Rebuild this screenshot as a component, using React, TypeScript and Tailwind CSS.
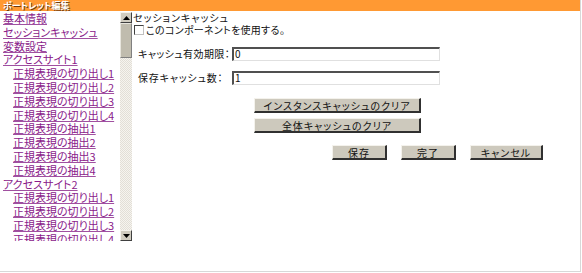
import React from 'react';

const FONT = {
  fontFamily: '"Noto Sans CJK JP", "Noto Sans", sans-serif',
  fontFeatureSettings: '"palt"',
};

interface NavItem {
  label: string;
  indent?: boolean;
}

const NAV_ITEMS: NavItem[] = [
  { label: '基本情報' },
  { label: 'セッションキャッシュ' },
  { label: '変数設定' },
  { label: 'アクセスサイト1' },
  { label: '正規表現の切り出し1', indent: true },
  { label: '正規表現の切り出し2', indent: true },
  { label: '正規表現の切り出し3', indent: true },
  { label: '正規表現の切り出し4', indent: true },
  { label: '正規表現の抽出1', indent: true },
  { label: '正規表現の抽出2', indent: true },
  { label: '正規表現の抽出3', indent: true },
  { label: '正規表現の抽出4', indent: true },
  { label: 'アクセスサイト2' },
  { label: '正規表現の切り出し1', indent: true },
  { label: '正規表現の切り出し2', indent: true },
  { label: '正規表現の切り出し3', indent: true },
  { label: '正規表現の切り出し4', indent: true },
];

const OldButton: React.FC<{ label: string; className?: string }> = ({ label, className = '' }) => (
  <button
    className={`h-[15px] bg-[#cdc9bd] border-t border-l border-t-[#f4f2ec] border-l-[#f4f2ec] border-b-2 border-r-2 border-b-[#303030] border-r-[#303030] text-[10px] leading-[11px] tracking-[1px] text-[#111] flex items-center justify-center whitespace-nowrap ${className}`}
  >
    {label}
  </button>
);

const ArrowBox: React.FC<{ up?: boolean }> = ({ up }) => (
  <div className="w-[12px] h-[11px] bg-[#d0ccc0] border-t border-l border-t-[#f4f2ec] border-l-[#f4f2ec] border-b border-r border-b-[#404040] border-r-[#404040] flex items-center justify-center">
    <svg width="7" height="4" viewBox="0 0 7 4">
      {up ? <polygon points="3.5,0 7,4 0,4" fill="#000" /> : <polygon points="0,0 7,0 3.5,4" fill="#000" />}
    </svg>
  </div>
);

const OldInput: React.FC<{ value: string }> = ({ value }) => (
  <div className="w-[208px] h-[14px] shrink-0 border-t-2 border-l-2 border-t-[#505050] border-l-[#505050] border-b border-r border-b-[#e0e0e0] border-r-[#e0e0e0] bg-white text-[10px] leading-[10px] pl-[1px] flex items-center">
    {value}
  </div>
);

export default function App() {
  return (
    <div className="w-[582px] h-[273px] bg-white" style={FONT}>
      <div className="w-[581px] h-[272px] border-r border-b border-[#d8d8d8] flex flex-col">
        {/* title bar */}
        <div className="h-[11px] bg-[#ff9933] flex items-center pl-[3px]">
          <span
            className="text-[9px] leading-[11px] font-bold text-white"
            style={{ textShadow: '1px 1px 0 #6b3a10' }}
          >
            ポートレット編集
          </span>
        </div>

        <div className="flex">
          {/* left nav with scrollbar */}
          <div className="w-[133px] h-[230px] mt-[1px] flex">
            <div className="w-[120px] h-[229px] overflow-hidden pl-[3px]">
              {NAV_ITEMS.map((item, i) => (
                <div key={i} className={`text-[11px] leading-[13.8px] whitespace-nowrap ${item.indent ? 'pl-[10px]' : ''}`}>
                  <a className="text-[#8a1a8a] underline underline-offset-[1px] decoration-[#a050a0]">{item.label}</a>
                </div>
              ))}
            </div>
            <div className="w-[12px] h-[229px] flex flex-col">
              <ArrowBox up />
              <div className="h-[35px] bg-[#c0bcae] border-b border-r border-b-[#808080] border-r-[#808080] border-t border-l border-t-[#e8e6de] border-l-[#e8e6de]" />
              <div
                className="flex-1"
                style={{
                  backgroundColor: '#ece9e2',
                  backgroundImage: 'repeating-conic-gradient(#f6f4ef 0% 25%, #e2dfd7 0% 50%)',
                  backgroundSize: '2px 2px',
                }}
              />
              <ArrowBox />
            </div>
          </div>

          {/* right content */}
          <div className="flex-1 pt-[1px] text-[10px] leading-[12px] text-[#111] tracking-[1px]">
            <div className="h-[12px]">セッションキャッシュ</div>
            <div className="flex items-center h-[12px] pl-[1px]">
              <span className="w-[10px] h-[10px] border-t border-l border-t-[#404040] border-l-[#404040] border-b border-r border-b-[#c0c0c0] border-r-[#c0c0c0] bg-white mr-[2px]" />
              <span className="tracking-[0.3px]">このコンポーネントを使用する。</span>
            </div>

            <div className="flex items-center mt-[10px] h-[15px]">
              <span className="w-[99px] shrink-0 pl-[5px] whitespace-nowrap tracking-[0.4px]">キャッシュ有効期限：</span>
              <OldInput value="0" />
            </div>
            <div className="flex items-center mt-[9px] h-[15px]">
              <span className="w-[99px] shrink-0 pl-[5px] whitespace-nowrap tracking-[0.8px]">保存キャッシュ数：</span>
              <OldInput value="1" />
            </div>

            <div className="flex flex-col gap-[5px] mt-[13px] pl-[121px]">
              <OldButton label="インスタンスキャッシュのクリア" className="w-[167px]" />
              <OldButton label="全体キャッシュのクリア" className="w-[167px]" />
            </div>

            <div className="flex gap-[14px] mt-[12px] pl-[199px]">
              <OldButton label="保存" className="w-[55px]" />
              <OldButton label="完了" className="w-[55px]" />
              <OldButton label="キャンセル" className="w-[73px]" />
            </div>
          </div>
        </div>
      </div>
    </div>
  );
}
